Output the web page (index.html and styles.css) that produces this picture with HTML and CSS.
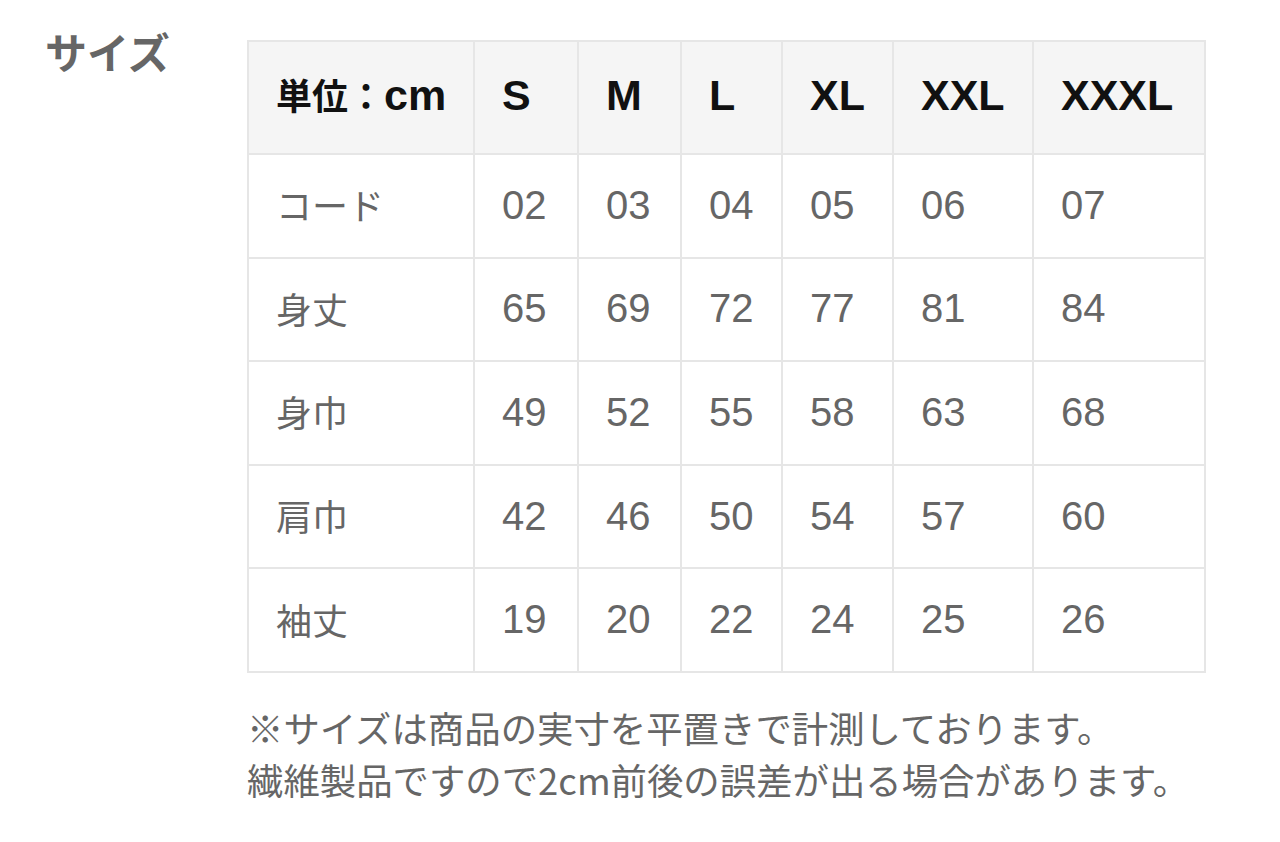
FILE: index.html
```html
<!DOCTYPE html>
<html lang="ja">
<head>
<meta charset="utf-8">
<link rel="stylesheet" href="styles.css">
</head>
<body>
<section class="size">
  <h2 class="size-title">サイズ</h2>
  <div class="size-body">
    <table class="size-table">
      <colgroup>
        <col class="c0"><col class="c1"><col class="c2"><col class="c3"><col class="c4"><col class="c5"><col class="c6">
      </colgroup>
      <thead>
        <tr><th><span class="jp">単位：</span>cm</th><th>S</th><th>M</th><th>L</th><th>XL</th><th>XXL</th><th>XXXL</th></tr>
      </thead>
      <tbody>
        <tr><td class="label">コード</td><td>02</td><td>03</td><td>04</td><td>05</td><td>06</td><td>07</td></tr>
        <tr><td class="label">身丈</td><td>65</td><td>69</td><td>72</td><td>77</td><td>81</td><td>84</td></tr>
        <tr><td class="label">身巾</td><td>49</td><td>52</td><td>55</td><td>58</td><td>63</td><td>68</td></tr>
        <tr><td class="label">肩巾</td><td>42</td><td>46</td><td>50</td><td>54</td><td>57</td><td>60</td></tr>
        <tr><td class="label">袖丈</td><td>19</td><td>20</td><td>22</td><td>24</td><td>25</td><td>26</td></tr>
      </tbody>
    </table>
    <p class="size-note">※サイズは商品の実寸を平置きで計測しております。<br>繊維製品ですので2cm前後の誤差が出る場合があります。</p>
  </div>
</section>
</body>
</html>
```
FILE: styles.css
```css
html, body {
  margin: 0;
  padding: 0;
  background: #ffffff;
}
body {
  font-family: "Liberation Sans", "Noto Sans CJK JP", sans-serif;
  color: #666666;
}
.size {
  display: flex;
  align-items: flex-start;
  padding: 40px 0 0 45px;
}
.size-title {
  width: 202px;
  margin: -18px 0 0 0;
  font-family: "Noto Sans CJK JP", sans-serif;
  font-size: 42px;
  font-weight: 700;
  line-height: 58px;
  color: #666666;
}
.size-body {
  display: flex;
  flex-direction: column;
}
.size-table {
  border-collapse: collapse;
  table-layout: fixed;
  width: 957px;
}
.c0 { width: 226px; }
.c1 { width: 104px; }
.c2 { width: 103px; }
.c3 { width: 101px; }
.c4 { width: 111px; }
.c5 { width: 140px; }
.c6 { width: 172px; }
.size-table th,
.size-table td {
  border: 2px solid #e6e6e6;
  text-align: left;
  padding: 0 0 0 27px;
  white-space: nowrap;
  line-height: 1.2;
}
.size-table th {
  height: 107px;
  padding-bottom: 4px;
  background: #f5f5f5;
  color: #111111;
  font-size: 43px;
  font-weight: 700;
}
.size-table th .jp {
  font-family: "Noto Sans CJK JP", sans-serif;
  font-size: 36px;
}
.size-table td {
  height: 99.6px;
  padding-bottom: 2px;
  color: #666666;
  font-size: 40px;
  font-weight: 400;
}
.size-table td.label {
  font-family: "Noto Sans CJK JP", sans-serif;
  font-size: 36px;
}
.size-note {
  margin: 28px 0 0 0;
  font-family: "Noto Sans CJK JP", sans-serif;
  font-size: 36.4px;
  line-height: 52px;
  color: #666666;
}
```
